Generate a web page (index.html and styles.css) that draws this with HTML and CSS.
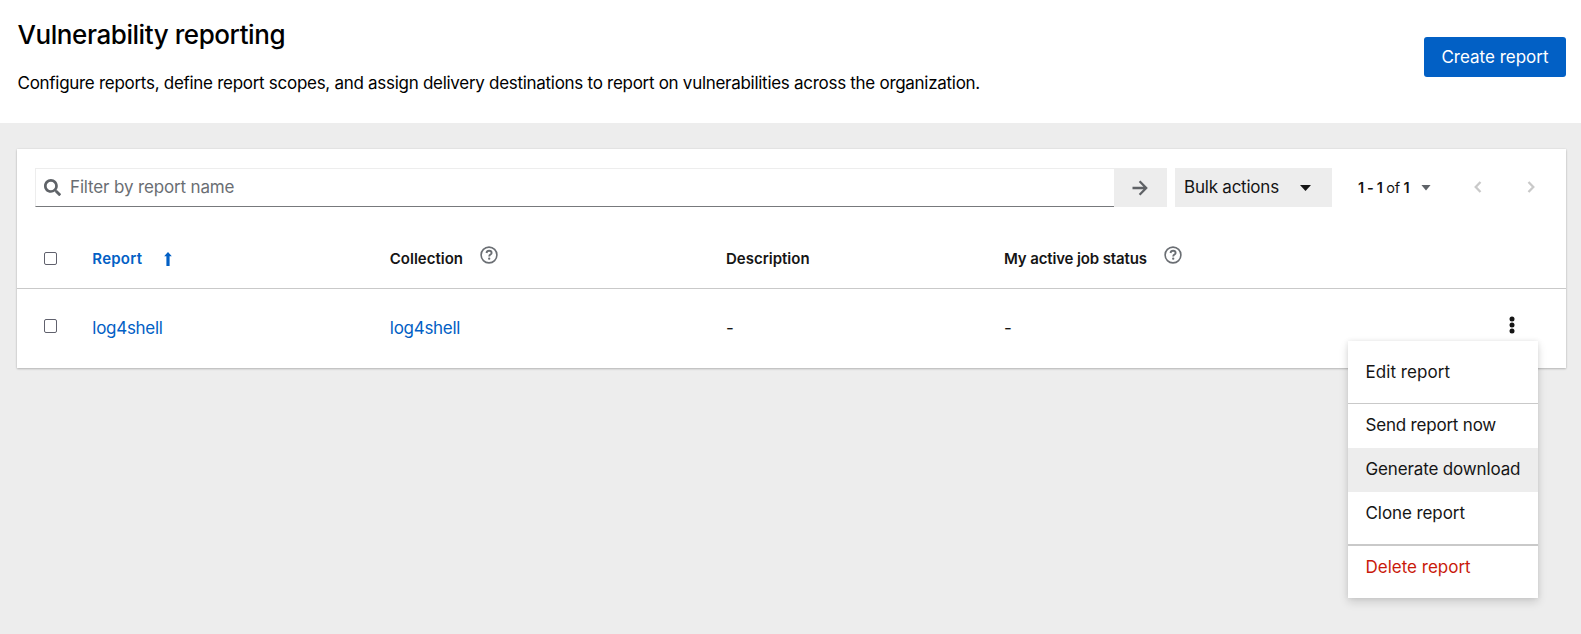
FILE: index.html
```html
<!DOCTYPE html>
<html lang="en">
<head>
<meta charset="utf-8">
<title>Vulnerability reporting</title>
<link rel="stylesheet" href="styles.css">
</head>
<body>
<header class="page-header">
  <div class="intro">
    <h1 class="title">Vulnerability reporting</h1>
    <p class="lead">Configure reports, define report scopes, and assign delivery destinations to report on vulnerabilities across the organization.</p>
  </div>
  <button class="primary">Create report</button>
</header>
<main class="card">
  <div class="toolbar">
    <div class="search">
      <svg class="search-icon" viewBox="0 0 512 512"><path d="M505 442.700L405.300 343c-4.500-4.500-10.600-7-17-7H372c27.600-35.300 44-79.700 44-128C416 93.100 322.900 0 208 0S0 93.100 0 208s93.100 208 208 208c48.300 0 92.700-16.400 128-44v16.300c0 6.400 2.500 12.500 7 17l99.700 99.700c9.400 9.400 24.600 9.400 33.900 0l28.300-28.300c9.400-9.400 9.400-24.600.1-34zM208 336c-70.700 0-128-57.200-128-128 0-70.700 57.200-128 128-128 70.700 0 128 57.200 128 128 0 70.700-57.200 128-128 128z"/></svg>
      <span class="placeholder">Filter by report name</span>
    </div>
    <button class="go" aria-label="Search"><svg viewBox="0 0 16 16"><path d="M0.500 8H14.300M7.600 1.200L14.200 8L7.600 14.800"/></svg></button>
    <button class="bulk"><span>Bulk actions</span><i class="caret"></i></button>
    <div class="pager">
      <span class="range"><b>1 - 1</b> of <b>1</b></span><i class="caret muted"></i>
    </div>
    <svg class="chev prev" viewBox="0 0 8 12"><path d="M6.500 1L1.700 6L6.500 11"/></svg>
    <svg class="chev" viewBox="0 0 8 12"><path d="M1.500 1L6.300 6L1.500 11"/></svg>
  </div>
  <div class="row head">
    <i class="check"></i>
    <div class="cell sorted"><span class="h-report">Report</span><svg class="sort" viewBox="0 0 8 14"><path d="M4 0L7.800 4.200H5.600V14H2.400V4.200H0.200Z"/></svg></div>
    <div class="cell"><span>Collection</span><svg class="help" viewBox="0 0 18 18"><circle cx="9" cy="9" r="7.900"/><path class="hook" d="M6.500 7C6.700 5.500 7.800 4.800 9.100 4.800C10.600 4.800 11.600 5.700 11.600 6.900C11.600 8.600 9.200 8.500 9.200 10.400"/><circle class="dot" cx="9.200" cy="12.700" r="1.150"/></svg></div>
    <div class="cell"><span>Description</span></div>
    <div class="cell"><span class="h-job">My active job status</span><svg class="help" viewBox="0 0 18 18"><circle cx="9" cy="9" r="7.900"/><path class="hook" d="M6.500 7C6.700 5.500 7.800 4.800 9.100 4.800C10.600 4.800 11.600 5.700 11.600 6.900C11.600 8.600 9.200 8.500 9.200 10.400"/><circle class="dot" cx="9.200" cy="12.700" r="1.150"/></svg></div>
  </div>
  <div class="row data">
    <i class="check"></i>
    <div class="cell"><a class="link">log4shell</a></div>
    <div class="cell"><a class="link">log4shell</a></div>
    <div class="cell"><span>-</span></div>
    <div class="cell"><span>-</span></div>
    <div class="actions">
      <svg class="kebab" viewBox="0 0 6 18"><circle cx="3" cy="3" r="2.500"/><circle cx="3" cy="9" r="2.500"/><circle cx="3" cy="15" r="2.500"/></svg>
      <div class="menu">
        <div class="item edit">Edit report</div>
        <hr class="rule">
        <div class="item send">Send report now</div>
        <div class="item active">Generate download</div>
        <div class="item clone">Clone report</div>
        <hr class="rule thick">
        <div class="item danger">Delete report</div>
      </div>
    </div>
  </div>
</main>
</body>
</html>
```
FILE: styles.css
```css
* { box-sizing: border-box; }
body {
  margin: 0;
  min-height: 634px;
  background: #ededed;
  color: #151515;
  font: 17px/26px Inter, "Liberation Sans", sans-serif;
}
button { border: 0; padding: 0; font: inherit; color: inherit; }
.page-header {
  height: 123px;
  padding: 0 15px 0 17.500px;
  display: flex;
  justify-content: space-between;
  align-items: flex-start;
  background: #fff;
  color: #000;
}
.intro { padding-top: 18px; }
.title { margin: 0; font-size: 26px; line-height: 34px; font-weight: 500; letter-spacing: -.43px; }
.lead { margin: 18px 0 0; white-space: nowrap; letter-spacing: -.286px; }
.primary {
  width: 142px;
  height: 40px;
  margin-top: 37px;
  border-radius: 3px;
  background: #0260c5;
  color: #fff;
}
.card {
  height: 219px;
  margin: 26px 15px 0 17px;
  background: #fff;
  box-shadow: 0 1px 2px rgba(3,3,3,.22), 0 0 2px rgba(3,3,3,.08);
}
.toolbar { height: 77px; padding: 19px 31px 0 18px; display: flex; }
.search {
  flex: none;
  width: 1079px;
  height: 39px;
  padding-left: 8px;
  display: flex;
  align-items: center;
  border: 1px solid #ededed;
  border-right: 0;
  border-bottom-color: #77797c;
  color: #6a6e73;
}
.search-icon { width: 17px; height: 17px; margin-right: 9px; fill: #5f6368; }
.placeholder { letter-spacing: -.15px; padding-bottom: 1px; }
.go { flex: none; width: 53px; height: 39px; padding-right: 2px; display: grid; place-items: center; background: #ededed; }
.go svg { width: 16px; height: 16px; fill: none; stroke: #5f6266; stroke-width: 2.3; }
.bulk {
  flex: none;
  width: 157px;
  height: 39px;
  margin-left: 8px;
  padding: 0 21px 1px 9px;
  display: flex;
  align-items: center;
  justify-content: space-between;
  background: #ededed;
  letter-spacing: -.22px;
}
.bulk .caret { margin-top: 2px; }
.caret { width: 11px; height: 6px; background: #151515; clip-path: polygon(0 0, 100% 0, 50% 100%); }
.muted { width: 10px; background: #5f6368; }
.pager { flex: none; width: 73px; height: 39px; margin-left: 26px; display: flex; align-items: center; justify-content: space-between; font-size: 14.500px; letter-spacing: -.35px; }
.range b { font-weight: 600; }
.chev { flex: none; width: 8px; height: 12px; margin: 13px 0 0 45px; fill: none; stroke: #c9c9c9; stroke-width: 2.300; }
.prev { margin-left: 43px; }
.row { display: grid; grid-template-columns: 48.300px 297.500px 336.200px 278px auto 70px; padding-left: 27px; align-items: center; }
.head { height: 63px; padding-top: 3px; border-bottom: 1px solid #c9c9c9; font-size: 15px; font-weight: 600; }
.data { height: 79px; padding-bottom: 2px; }
.check { width: 13px; height: 13px; border: 1px solid #60616d; border-radius: 2px; }
.data .check { height: 14px; margin-bottom: 4px; }
.cell { display: flex; align-items: center; height: 26px; }
.sorted { color: #0260c5; }
.h-report { letter-spacing: .25px; }
.h-job { letter-spacing: -.13px; }
.sort { width: 8px; height: 14px; fill: #0260c5; margin: 0 0 0 21.500px; }
.help { width: 18px; height: 18px; margin: 0 0 8px 17px; fill: none; stroke: #6a6e73; stroke-width: 1.600; }
.help .hook { stroke-width: 1.900; }
.help .dot { fill: #6a6e73; stroke: none; }
.link { color: #0260c5; letter-spacing: -.28px; }
.actions { position: relative; width: 70px; height: 18px; margin-bottom: 6px; }
.kebab { display: block; width: 6px; height: 18px; fill: #151515; margin-left: 13px; }
.menu {
  position: absolute;
  top: 25px;
  right: 28px;
  width: 190px;
  height: 257px;
  padding: 9px 0 8px;
  background: #fff;
  box-shadow: 0 4px 9px rgba(3,3,3,.14), 0 0 5px rgba(3,3,3,.08);
}
.item { height: 44px; padding: 8px 17.500px; white-space: nowrap; }
.edit { padding-top: 9px; letter-spacing: .05px; }
.send { letter-spacing: -.2px; }
.active { background: #ededed; letter-spacing: -.14px; }
.clone { letter-spacing: -.08px; }
.danger { color: #c9190b; }
.rule { height: 1px; margin: 9px 0 0; border: 0; background: #c9c9c9; }
.thick { height: 2px; margin-top: 8px; }
```
